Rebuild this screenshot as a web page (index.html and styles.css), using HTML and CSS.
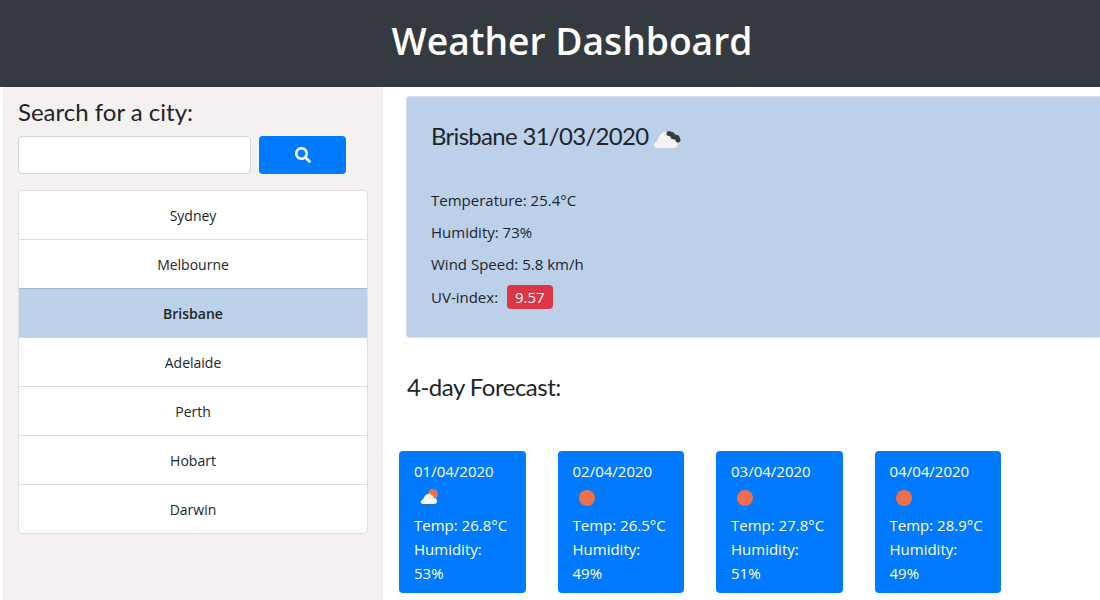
FILE: index.html
```html
<!DOCTYPE html>
<html lang="en">
<head>
<meta charset="UTF-8" />
<title>Weather Dashboard</title>
<link rel="stylesheet" href="styles.css">
</head>
<body>
<header class="topbar">
  <h1>Weather Dashboard</h1>
</header>

<div class="page">
  <!-- search and saved cities -->
  <aside class="sidebar">
    <h2 class="hand search-title">Search for a city:</h2>
    <form class="search">
      <input type="text" class="search-input" />
      <button type="button" class="search-btn">
        <svg viewBox="0 0 512 512" width="16" height="16"><path fill="#fff" d="M505 442.700L405.300 343c-4.500-4.500-10.600-7-17-7H372c27.600-35.300 44-79.700 44-128C416 93.100 322.900 0 208 0S0 93.100 0 208s93.100 208 208 208c48.300 0 92.700-16.400 128-44v16.300c0 6.400 2.500 12.500 7 17l99.700 99.700c9.400 9.400 24.600 9.400 33.900 0l28.300-28.300c9.400-9.400 9.400-24.600.1-34zM208 336c-70.700 0-128-57.200-128-128 0-70.700 57.200-128 128-128 70.700 0 128 57.200 128 128 0 70.700-57.200 128-128 128z"/></svg>
      </button>
    </form>
    <ul class="cities">
      <li>Sydney</li>
      <li>Melbourne</li>
      <li class="active">Brisbane</li>
      <li>Adelaide</li>
      <li>Perth</li>
      <li>Hobart</li>
      <li>Darwin</li>
    </ul>
  </aside>

  <main class="content">
    <section class="current">
      <h2 class="hand current-title">Brisbane 31/03/2020
        <svg class="cloud-icon" viewBox="0 0 30 20" width="30" height="20">
          <path fill="#f4f4f4" d="M3 19c-4 0-4-6 0-6.500C4 8 7 3 12 3c4 0 6 3 7 6 3 0 5 2 5 5 0 3-2 5-4 5z"/>
          <path fill="none" stroke="#3a3a3c" stroke-width="5" stroke-linecap="round" d="M15 4.500l3 1 1 2 4 1 1 2.500"/>
        </svg>
      </h2>
      <p>Temperature: 25.4°C</p>
      <p>Humidity: 73%</p>
      <p>Wind Speed: 5.8 km/h</p>
      <p>UV-index: <span class="badge">9.57</span></p>
    </section>

    <h2 class="hand forecast-title">4-day Forecast:</h2>

    <div class="forecast">
      <div class="day">
        <div>01/04/2020</div>
        <svg class="day-icon" viewBox="0 0 24 30" width="24" height="30">
          <circle cx="19" cy="11" r="5" fill="#ee6e4d"/>
          <path fill="#f6f6f6" d="M9 21c-3 0-3-4 0-4.500C10 13 12 11 15 11c3 0 4 2 5 4 2 0 3 1.500 3 3 0 2-1 3-3 3z"/>
          <path stroke="#555" stroke-width="1" fill="none" d="M13 21l-1 2.500M16 21l-1 3.500M19 21l-1 2"/>
        </svg>
        <div>Temp: 26.8°C</div>
        <div>Humidity: 53%</div>
      </div>
      <div class="day">
        <div>02/04/2020</div>
        <svg class="day-icon" viewBox="0 0 24 30" width="24" height="30"><circle cx="14" cy="15" r="8" fill="#ee6e4d"/></svg>
        <div>Temp: 26.5°C</div>
        <div>Humidity: 49%</div>
      </div>
      <div class="day">
        <div>03/04/2020</div>
        <svg class="day-icon" viewBox="0 0 24 30" width="24" height="30"><circle cx="14" cy="15" r="8" fill="#ee6e4d"/></svg>
        <div>Temp: 27.8°C</div>
        <div>Humidity: 51%</div>
      </div>
      <div class="day">
        <div>04/04/2020</div>
        <svg class="day-icon" viewBox="0 0 24 30" width="24" height="30"><circle cx="14" cy="15" r="8" fill="#ee6e4d"/></svg>
        <div>Temp: 28.9°C</div>
        <div>Humidity: 49%</div>
      </div>
    </div>
  </main>
</div>
</body>
</html>
```

FILE: styles.css
```css
* {
    box-sizing: border-box;
}

html, body {
    height: 600px;
    overflow: hidden;
}

body {
    margin: 0;
    font-family: "Open Sans", "Liberation Sans", sans-serif;
    font-size: 15px;
    color: #212529;
    background: #fff;
}

.topbar {
    height: 87px;
    background: #343a40;
    display: flex;
    align-items: center;
    justify-content: center;
    padding: 0 0 6px 44px;
}

.topbar h1 {
    margin: 0;
    color: #fff;
    font-size: 37.200px;
    font-weight: 600;
}

.page {
    display: flex;
    height: 513px;
    padding-left: 3px;
}

.hand {
    font-family: "Lato", "Liberation Sans", sans-serif;
    font-weight: 400;
    font-size: 24px;
    margin: 0;
}

/* sidebar */
.sidebar {
    width: 380px;
    flex: none;
    background: #f5f1f0;
    padding: 9px 15px 0;
}

.search-title {
    line-height: 32px;
    margin-bottom: 8px;
}

.search {
    display: flex;
    gap: 8px;
    margin-bottom: 16px;
}

.search-input {
    width: 233px;
    height: 38px;
    border: 1px solid #ced4da;
    border-radius: 4px;
    background: #fff;
}

.search-btn {
    width: 87px;
    height: 38px;
    border: 0;
    border-radius: 4px;
    background: #007bff;
    display: flex;
    align-items: center;
    justify-content: center;
}

.cities {
    list-style: none;
    margin: 0;
    padding: 0;
    width: 350px;
    background: #fff;
    border: 1px solid #dfdfdf;
    border-radius: 4px;
}

.cities li {
    height: 49px;
    display: flex;
    align-items: center;
    justify-content: center;
    font-size: 14px;
    border-bottom: 1px solid #dfdfdf;
}

.cities li:last-child {
    height: 48px;
    border-bottom: 0;
}

.cities .active {
    background: #bdd0e9;
    font-weight: 600;
    box-shadow: 0 -1px 0 #9fb8d6;
    border-bottom-color: #c9d8ec;
}

/* main area */
.content {
    flex: 1;
    min-width: 0;
    padding: 9px 0 0 16px;
}

.current {
    height: 242px;
    margin-left: 7px;
    padding: 21px 24px;
    background: #bdd0e9;
    border: 1px solid #d5dde8;
    border-right: 0;
    border-radius: 4px 0 0 4px;
}

.current-title {
    letter-spacing: -0.7px;
    line-height: 36px;
    margin-bottom: 35px;
    display: flex;
    align-items: center;
    gap: 6px;
}

.cloud-icon {
    margin-top: 5px;
}

.current p {
    margin: 0 0 9px;
    line-height: 23px;
}

.badge {
    display: inline-block;
    margin-left: 5px;
    padding: 0 8px;
    background: #dc3545;
    color: #fff;
    border-radius: 4px;
    line-height: 24px;
}

.forecast-title {
    letter-spacing: -0.5px;
    line-height: 32px;
    margin: 33px 0 48px 8px;
}

.forecast {
    display: flex;
    gap: 32px;
}

.day {
    width: 126.500px;
    height: 142px;
    padding: 8px 15px;
    background: #007bff;
    color: #fff;
    border-radius: 4px;
    line-height: 24px;
}

.day-icon {
    display: block;
}
```
